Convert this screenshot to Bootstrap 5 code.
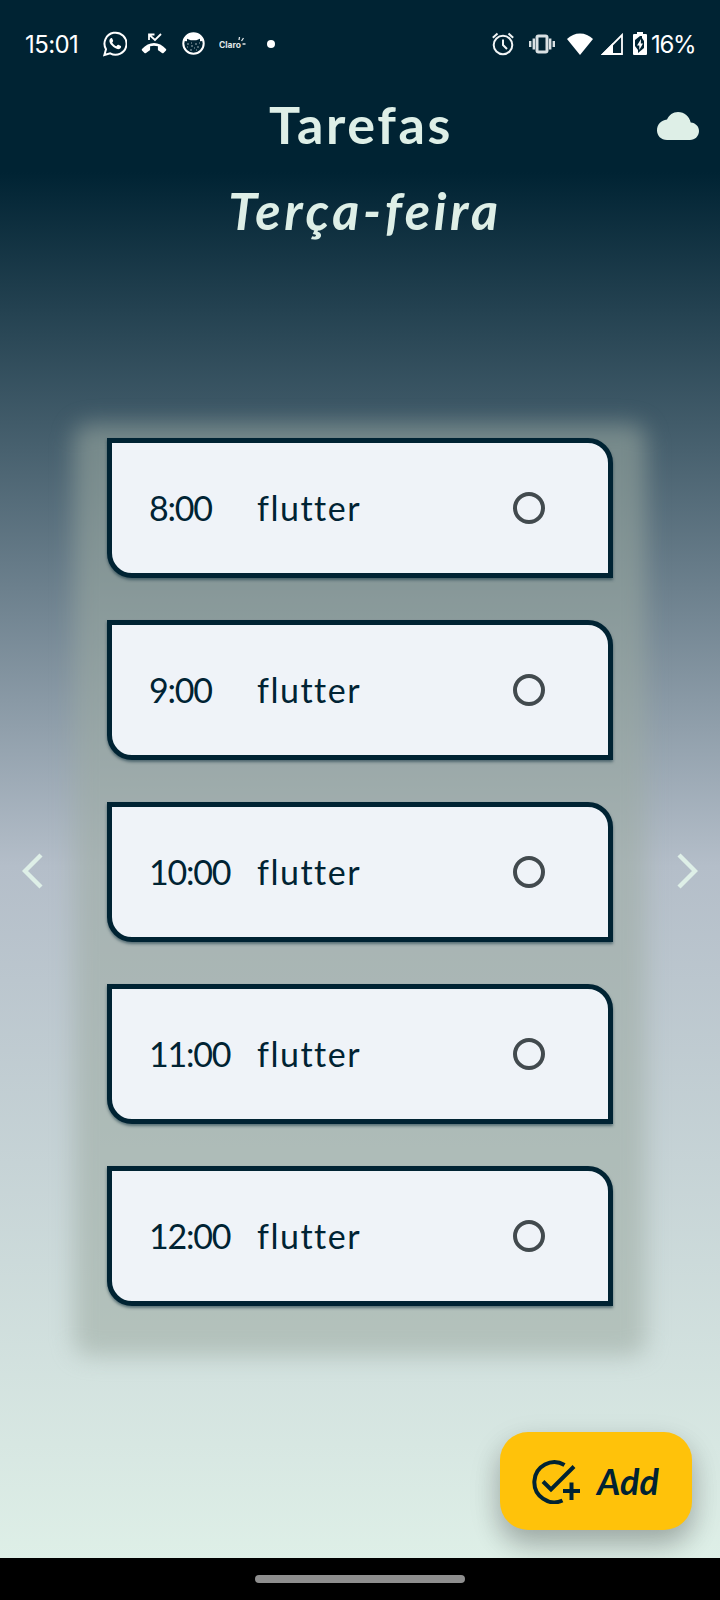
<!DOCTYPE html>
<html lang="pt-BR">
<head>
<meta charset="utf-8">
<meta name="viewport" content="width=device-width, initial-scale=1">
<title>Tarefas</title>
<link href="https://cdn.jsdelivr.net/npm/bootstrap@5.3.0/dist/css/bootstrap.min.css" rel="stylesheet">
<style>
:root{--ink:#002333;--mint:#deefe7}
body{background:#000;font-family:Lato,"Open Sans",sans-serif;color:var(--ink)}
.phone{width:720px;height:1600px}
.screen{height:1558px;background:linear-gradient(180deg,#002333 0,#002333 172px,#b4bec9 866px,#deefe7 1558px)}
.statusbar{height:87px;color:#fff;font:400 24px/28px Inter,sans-serif}
.statusbar svg{display:block;flex:none}
.clock{width:78px;letter-spacing:-.6px;padding-top:2px}
.appbar{height:77px;color:var(--mint)}
.heading{font-size:52px;line-height:60px;font-weight:700;letter-spacing:2.6px;white-space:nowrap}
.appbar .heading{padding:0 0 3px 2px}
.weekday{height:92px;color:var(--mint)}
.weekday .heading{font-style:italic;letter-spacing:3.6px;padding-left:10px}
.pager{margin-top:182px;height:868px}
.pager .arrow{width:107px;padding-bottom:2px}
.tasks{width:506px;gap:42px}
.tasks::before{content:"";position:absolute;inset:-14px -33px -50px;border-radius:16px;background:rgba(156,170,162,.57);filter:blur(11px)}
.task{position:relative;height:140px;background:#eff3f8;border:5px solid var(--ink);border-radius:0 25px 0 25px;box-shadow:0 2px 3px rgba(0,35,51,.5);font-size:34px;line-height:40px}
.hour{width:108px;letter-spacing:-1.2px;margin-left:37px}
.what{letter-spacing:1.5px;font-variant-ligatures:none}
.check{width:32px;height:32px;border:4px solid #424a4e;border-radius:50%;margin-right:63px}
.fab{width:192px;height:98px;border-radius:28px;margin:126px 28px 0 0;background:#ffc20a;color:var(--ink);box-shadow:0 14px 26px rgba(0,0,0,.2),0 12px 34px rgba(0,0,0,.12);font-size:36px;line-height:44px;font-weight:700;font-style:italic}
.fab:hover{background:#ffc20a}
.gesture{height:42px}
.pill{width:210px;height:8px;border-radius:4px;background:#8e8e8e}
</style>
</head>
<body>
<div class="phone overflow-hidden d-flex flex-column">
<main class="screen overflow-hidden d-flex flex-column flex-shrink-0">
  <div class="statusbar d-flex align-items-center justify-content-between">
    <div class="d-flex align-items-center" style="padding-left:25px">
      <span class="clock">15:01</span>
      <svg width="24" height="26" viewBox="0 0 24 26" fill="none" stroke="#fff" stroke-width="2"><path d="M1.4 24 3 18.2A11 11 0 1 1 7.2 22.3Z"/><path d="M8.4 6.9c-3 1.2-2.4 4.7.5 7.7 3.1 3.3 7.4 5.1 9 1.9.4-1.1.2-1.4-.5-1.7l-2-1c-.5-.2-.9 0-1.2.4l-.8 1c-1.7-.6-3.3-2-4.2-3.8l.8-1c.2-.4.2-.7 0-1.1l-.8-1.8c-.2-.5-.5-.6-.8-.6Z" fill="#fff" stroke="none"/></svg>
      <svg style="margin-left:14px" width="26" height="24" viewBox="0 0 26 24"><path d="M1 17C8 9 18 9 25 17q.6.700 0 1.500l-2.500 2.400q-.7.600-1.500 0l-3.500-2.300q-.6-.4-.6-1.200v-3.100q-4-1.200-7.800 0v3.100q0 .8-.6 1.200L5 20.900q-.8.600-1.500 0L1 18.500Q.4 17.700 1 17Z" fill="#fff"/><path d="M8 8V2.500h5.500M8.500 3l5.500 5 6-6" fill="none" stroke="#fff" stroke-width="1.8"/></svg>
      <svg style="margin-left:15px" width="23" height="23" viewBox="0 0 23 23"><circle cx="11.5" cy="11.5" r="10.2" fill="none" stroke="#fff" stroke-width="2"/><path d="M2 9C3 4 7 1 11.500 1S20 4 21 9l-3 .2V6.800l-3.700 1.500H8.700L5 6.800v2.400Z" fill="#fff"/><path d="M5 12h2m2-1h1m3 1h2m2-1h1M5 15h1m3-1h2m4 1h2M8 18h2m2-2h1m1 2h1" stroke="#9aabb2"/></svg>
      <svg style="margin-left:14px" width="28" height="24" viewBox="0 0 28 24"><text x="0" y="16" font-family="Inter, sans-serif" font-size="8.5" font-weight="700" fill="#e1e7e9" textLength="22">Claro</text><path d="m20 8 .5-3M22.500 9l2-3M23.500 12h3" stroke="#e1e7e9" stroke-width="1.3"/></svg>
      <svg style="margin-left:20px" width="8" height="8" viewBox="0 0 8 8"><circle cx="4" cy="4" r="4" fill="#fff"/></svg>
    </div>
    <div class="d-flex align-items-center" style="margin-right:25px">
      <svg width="22" height="24" viewBox="0 0 22 24" fill="none" stroke="#f0f4f5" stroke-width="2"><circle cx="11" cy="13" r="9.3"/><path d="M11 7.500V13l4 4M.8 5.700 5.500 1.500m11 0 4.700 4.200"/></svg>
      <svg style="margin-left:15px" width="26" height="20" viewBox="0 0 26 20" fill="none" stroke="#d9e0e3" stroke-width="2.4"><rect x="8" y="2" width="10" height="16" rx="1.5" stroke-width="3"/><path d="M4.800 4.500v11M1.200 7v6M21.200 4.500v11M24.800 7v6"/></svg>
      <svg style="margin-left:12px" width="26" height="22" viewBox="0 0 26 22"><path d="M0 6C7-1.500 19-1.500 26 6L13 22Z" fill="#fff"/></svg>
      <svg style="margin-left:8px" width="22" height="22" viewBox="0 0 22 22"><path d="M21 2v19H2Z" fill="none" stroke="#fff" stroke-width="1.8"/><path d="M12 10v12H0Z" fill="#fff"/></svg>
      <svg style="margin-left:10px" width="14" height="24" viewBox="0 0 14 24"><path d="M4 0h6v2h3q1 0 1 1v19q0 1-1 1H1q-1 0-1-1V3q0-1 1-1h3Z" fill="#fff"/><path d="M7 4 2 8v6l3 4v3l6-5V9L9 6V4Z" fill="#002333"/><path d="m8 7-4 6.500h2.300V18L10 11.500H7.800Z" fill="#fff"/></svg>
      <span style="width:44px;margin-left:4px;padding-top:2px;letter-spacing:-1.3px">16%</span>
    </div>
  </div>
  <header class="appbar position-relative d-flex align-items-center justify-content-center">
    <h1 class="heading m-0">Tarefas</h1>
    <svg class="position-absolute" style="right:21px;top:25px" width="42" height="28" viewBox="0 0 42 28"><path d="M10 28C4 28 0 23.500 0 18.500c0-6 4-10.300 10-11C12 3 16 0 21 0c6.500 0 11.300 4.300 12.700 10.600C38.500 11 42 14.500 42 19c0 5-4 9-9 9Z" fill="#deefe7"/></svg>
  </header>
  <div class="weekday d-flex align-items-center justify-content-center">
    <h2 class="heading m-0">Terça-feira</h2>
  </div>
  <div class="pager d-flex flex-shrink-0 align-items-start">
    <div class="arrow position-relative h-100 d-flex align-items-center"><svg style="margin-left:22px" width="21" height="36" viewBox="0 0 21 36" fill="none" stroke="#deefe7" stroke-width="4.4"><path d="M19 2 3 18l16 16"/></svg></div>
    <div class="tasks position-relative d-flex flex-column" id="tasks"></div>
    <div class="arrow position-relative h-100 d-flex align-items-center justify-content-end"><svg style="margin-right:22px" width="21" height="36" viewBox="0 0 21 36" fill="none" stroke="#deefe7" stroke-width="4.4"><path d="m2 2 16 16L2 34"/></svg></div>
  </div>
  <button class="fab btn border-0 position-relative d-flex align-items-center align-self-end flex-shrink-0 p-0">
    <svg style="margin-left:32px" width="49" height="45" viewBox="0 0 49 45" fill="none" stroke="#002333" stroke-width="4"><path d="M32.500 6A20 20 0 1 0 30.500 41.500M11 22.500l8 8L42 7.500"/><path d="M31 32h17M39.500 23.500V41"/></svg>
    <span style="margin-left:16px">Add</span>
  </button>
</main>
<div class="gesture bg-black d-flex align-items-center justify-content-center"><div class="pill"></div></div>
</div>
<script src="https://cdn.jsdelivr.net/npm/bootstrap@5.3.0/dist/js/bootstrap.bundle.min.js"></script>
<script>
document.getElementById('tasks').innerHTML = [8, 9, 10, 11, 12].map(h =>
  `<div class="task d-flex align-items-center"><span class="hour">${h}:00</span><span class="what">flutter</span><span class="check ms-auto"></span></div>`).join('');
</script>
</body>
</html>
